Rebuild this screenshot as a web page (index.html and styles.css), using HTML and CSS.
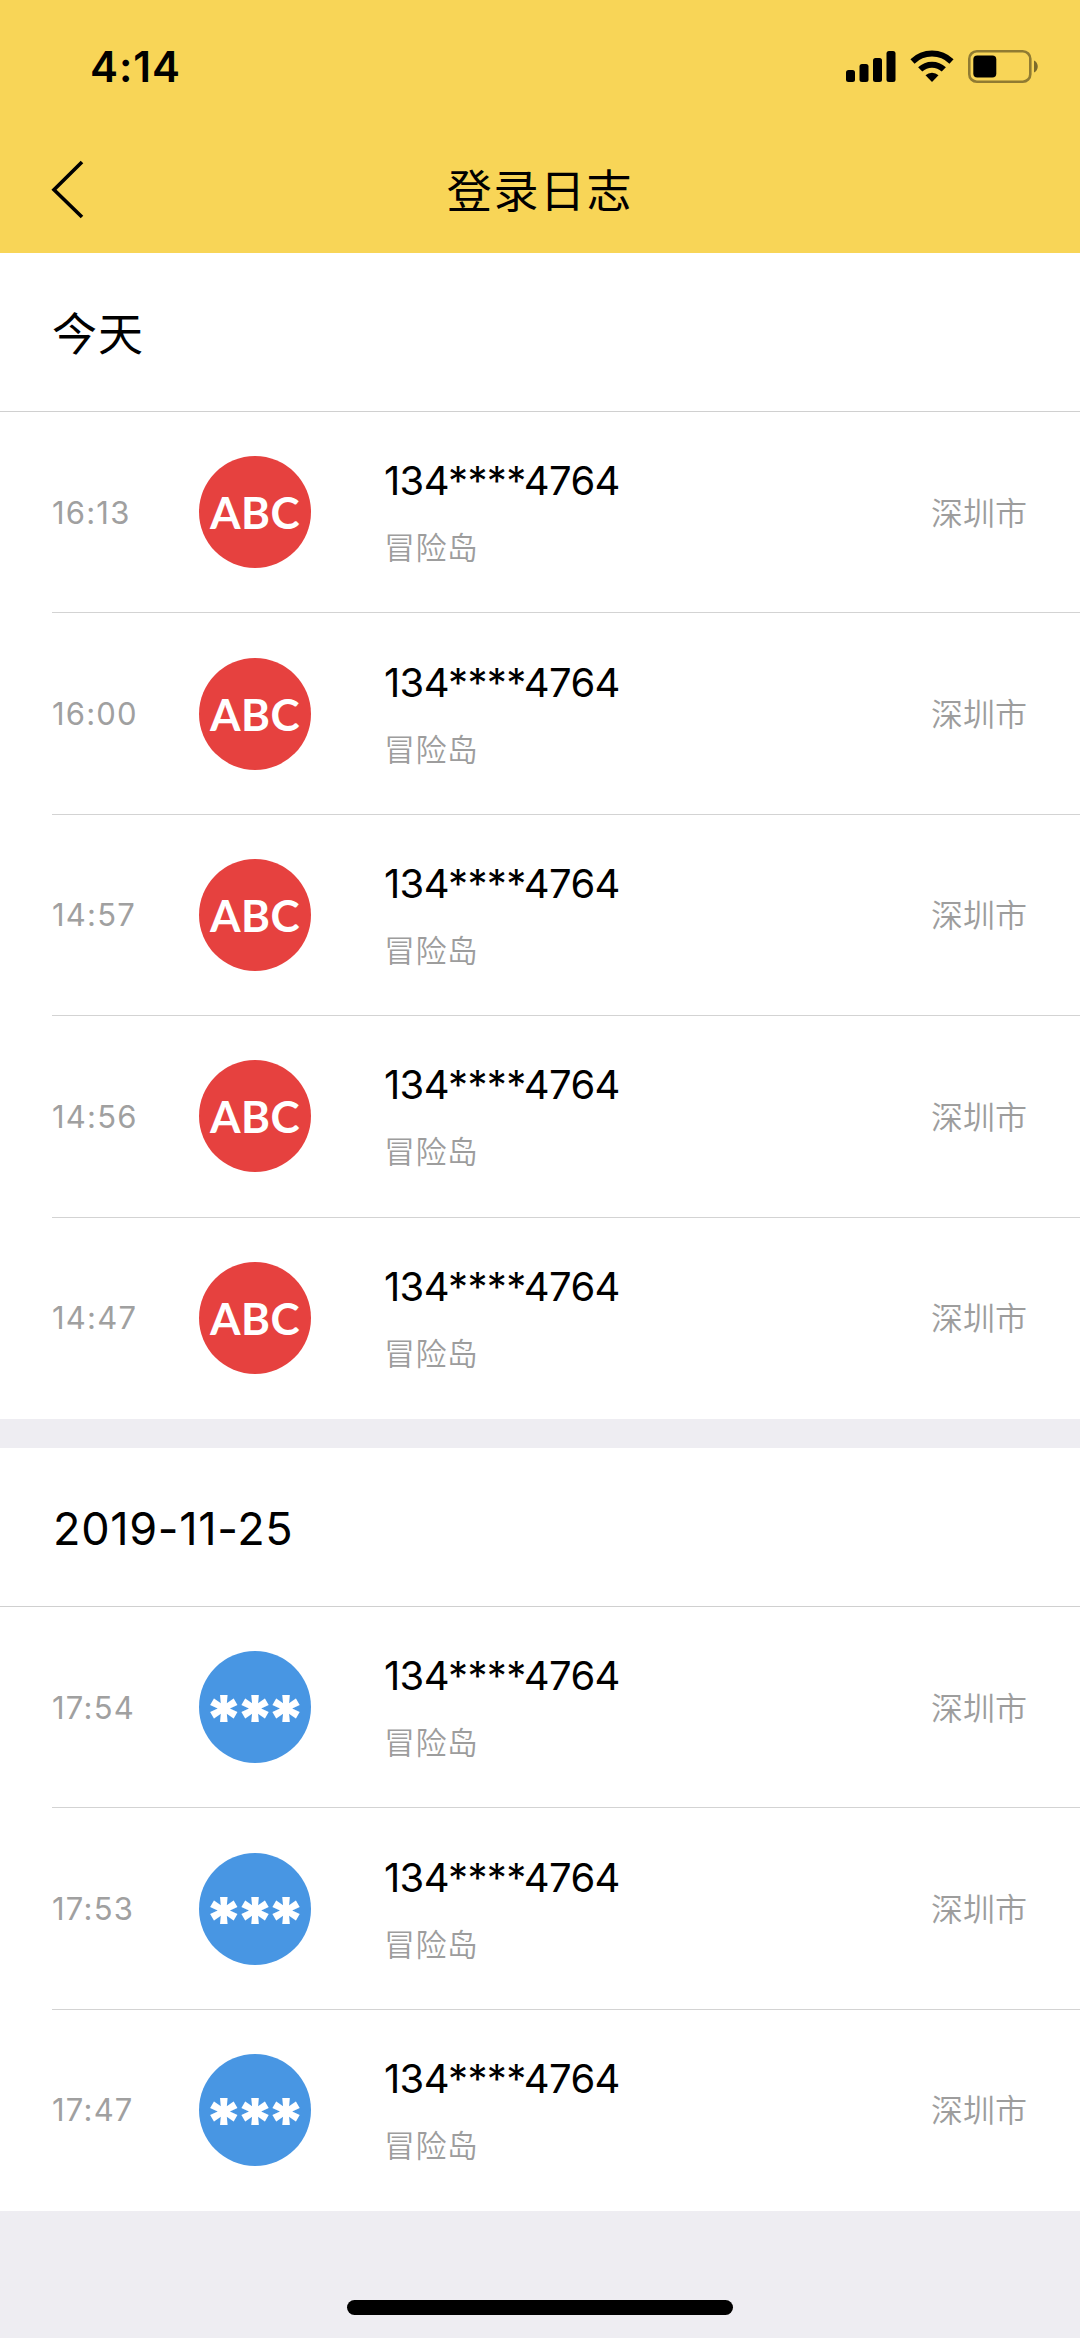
FILE: index.html
```html
<!DOCTYPE html>
<html lang="zh-CN">
<head>
    <meta charset="UTF-8">
    <meta name="viewport" content="width=device-width, initial-scale=1.0">
    <title>登录日志</title>
    <link rel="stylesheet" href="styles.css">
</head>
<body>
    <header class="header">
        <div class="status-bar">
            <span class="clock">4:14</span>
            <div class="status-icons">
                <svg width="50" height="32" viewBox="0 0 50 32">
                    <rect x="0" y="20" width="9" height="12" rx="2.5"/>
                    <rect x="13.5" y="14" width="9" height="18" rx="2.5"/>
                    <rect x="27" y="8" width="9" height="24" rx="2.5"/>
                    <rect x="40.5" y="1" width="9" height="31" rx="2.5"/>
                </svg>
                <svg class="wifi" width="44" height="32" viewBox="0 0 44 32">
                    <g fill="none" stroke="#000" stroke-width="6">
                        <path d="M2.5 11.5 A28 28 0 0 1 41.5 11.5"/>
                        <path d="M10.2 19.4 A17 17 0 0 1 33.8 19.4"/>
                    </g>
                    <path d="M15.5 25.2 A9.5 9.5 0 0 1 28.5 25.2 L22 32 Z"/>
                </svg>
                <svg class="battery" width="71" height="33" viewBox="0 0 71 33">
                    <rect x="1.3" y="1.3" width="61" height="30.4" rx="7.5" fill="none" stroke="#000" stroke-opacity=".42" stroke-width="2.6"/>
                    <rect x="5.3" y="5.5" width="23" height="22" rx="4"/>
                    <path d="M66 10.5 C71 12.5 71 20.5 66 22.5 Z" fill-opacity=".5"/>
                </svg>
            </div>
        </div>
        <div class="nav-bar">
            <svg class="back" width="36" height="60" viewBox="0 0 36 60">
                <path d="M31 2 L3 29.7 L31 57" fill="none" stroke="#000" stroke-width="3.6"/>
            </svg>
            <h1 class="title">登录日志</h1>
        </div>
    </header>

    <section class="group">
        <h2 class="group-title">今天</h2>
        <ul class="list">
            <li class="row">
                <div class="row-inner">
                    <span class="time">16:13</span>
                    <span class="avatar red">ABC</span>
                    <div class="info">
                        <p class="phone">134****4764</p>
                        <p class="app">冒险岛</p>
                    </div>
                    <span class="city">深圳市</span>
                </div>
            </li>
            <li class="row">
                <div class="row-inner">
                    <span class="time">16:00</span>
                    <span class="avatar red">ABC</span>
                    <div class="info">
                        <p class="phone">134****4764</p>
                        <p class="app">冒险岛</p>
                    </div>
                    <span class="city">深圳市</span>
                </div>
            </li>
            <li class="row">
                <div class="row-inner">
                    <span class="time">14:57</span>
                    <span class="avatar red">ABC</span>
                    <div class="info">
                        <p class="phone">134****4764</p>
                        <p class="app">冒险岛</p>
                    </div>
                    <span class="city">深圳市</span>
                </div>
            </li>
            <li class="row">
                <div class="row-inner">
                    <span class="time">14:56</span>
                    <span class="avatar red">ABC</span>
                    <div class="info">
                        <p class="phone">134****4764</p>
                        <p class="app">冒险岛</p>
                    </div>
                    <span class="city">深圳市</span>
                </div>
            </li>
            <li class="row">
                <div class="row-inner">
                    <span class="time">14:47</span>
                    <span class="avatar red">ABC</span>
                    <div class="info">
                        <p class="phone">134****4764</p>
                        <p class="app">冒险岛</p>
                    </div>
                    <span class="city">深圳市</span>
                </div>
            </li>
        </ul>
    </section>

    <section class="group">
        <h2 class="group-title date">2019-11-25</h2>
        <ul class="list">
            <li class="row">
                <div class="row-inner">
                    <span class="time">17:54</span>
                    <span class="avatar blue">***</span>
                    <div class="info">
                        <p class="phone">134****4764</p>
                        <p class="app">冒险岛</p>
                    </div>
                    <span class="city">深圳市</span>
                </div>
            </li>
            <li class="row">
                <div class="row-inner">
                    <span class="time">17:53</span>
                    <span class="avatar blue">***</span>
                    <div class="info">
                        <p class="phone">134****4764</p>
                        <p class="app">冒险岛</p>
                    </div>
                    <span class="city">深圳市</span>
                </div>
            </li>
            <li class="row">
                <div class="row-inner">
                    <span class="time">17:47</span>
                    <span class="avatar blue">***</span>
                    <div class="info">
                        <p class="phone">134****4764</p>
                        <p class="app">冒险岛</p>
                    </div>
                    <span class="city">深圳市</span>
                </div>
            </li>
        </ul>
    </section>

    <footer class="home-area">
        <div class="home-bar"></div>
    </footer>
</body>
</html>
```
FILE: styles.css
```css
* {
    box-sizing: border-box;
    margin: 0;
    padding: 0;
}

body {
    display: flex;
    flex-direction: column;
    min-height: 2338px;
    background-color: #eeedf2;
    color: #000;
    font-family: Inter, "Noto Sans CJK SC", sans-serif;
}

.header {
    height: 253px;
    background-color: #f8d557;
}

.status-bar {
    display: flex;
    justify-content: space-between;
    align-items: center;
    height: 132px;
    padding: 0 41px 0 90px;
}

.clock {
    padding-top: 1px;
    font-size: 42px;
    font-weight: 600;
    line-height: 50px;
    letter-spacing: 1px;
}

.status-icons {
    display: flex;
    align-items: center;
}

.wifi {
    margin-left: 14px;
}

.battery {
    margin-left: 14px;
}

.nav-bar {
    display: grid;
    grid-template-columns: 100px 1fr 100px;
    align-items: center;
    height: 116px;
    padding-left: 51px;
    padding-right: 51px;
}

.title {
    padding-top: 3px;
    font-size: 45px;
    font-weight: 400;
    line-height: 60px;
    letter-spacing: 1.6px;
    text-align: center;
}

.group {
    background-color: #fff;
    margin-bottom: 29px;
}

.group-title {
    height: 159px;
    padding-top: 3px;
    padding-left: 52px;
    border-bottom: 1px solid #d0d0d0;
    font-size: 45px;
    font-weight: 400;
    line-height: 158px;
    letter-spacing: 1px;
}

.date {
    padding-top: 2px;
    padding-left: 53px;
    letter-spacing: 0.7px;
}

.list {
    list-style: none;
}

.row {
    height: 201.4px;
    padding-left: 52px;
}

.row-inner {
    display: flex;
    align-items: center;
    height: 100%;
    padding-right: 53px;
    border-bottom: 1px solid #d3d3d3;
}

.row:last-child .row-inner {
    border-bottom-color: transparent;
}

.time {
    width: 147px;
    color: #a0a0a0;
    font-size: 31px;
    letter-spacing: 1.2px;
}

.avatar {
    width: 112px;
    height: 112px;
    border-radius: 50%;
    color: #fff;
    font-family: Lato, sans-serif;
    font-size: 44px;
    font-weight: 700;
    line-height: 112px;
    text-align: center;
}

.red {
    background-color: #e6413f;
    letter-spacing: 0.5px;
}

.blue {
    padding-top: 12px;
    padding-right: 9px;
    background-color: #4896e3;
    font-family: Inter, sans-serif;
    font-size: 66px;
    font-weight: 900;
    letter-spacing: -9px;
}

.info {
    flex: 1;
    padding-left: 73px;
}

.phone {
    padding-top: 3px;
    font-size: 40px;
    line-height: 50px;
    letter-spacing: -0.65px;
}

.app {
    margin-top: 19px;
    color: #9d9d9d;
    font-size: 31px;
    font-weight: 350;
    line-height: 46px;
    letter-spacing: 0.4px;
}

.city {
    padding-bottom: 3px;
    color: #9d9d9d;
    font-size: 32px;
    font-weight: 350;
}

.home-area {
    display: flex;
    flex: 1;
    justify-content: center;
    align-items: flex-end;
    padding-bottom: 23px;
}

.home-bar {
    width: 386px;
    height: 15px;
    border-radius: 8px;
    background-color: #000;
}
```
